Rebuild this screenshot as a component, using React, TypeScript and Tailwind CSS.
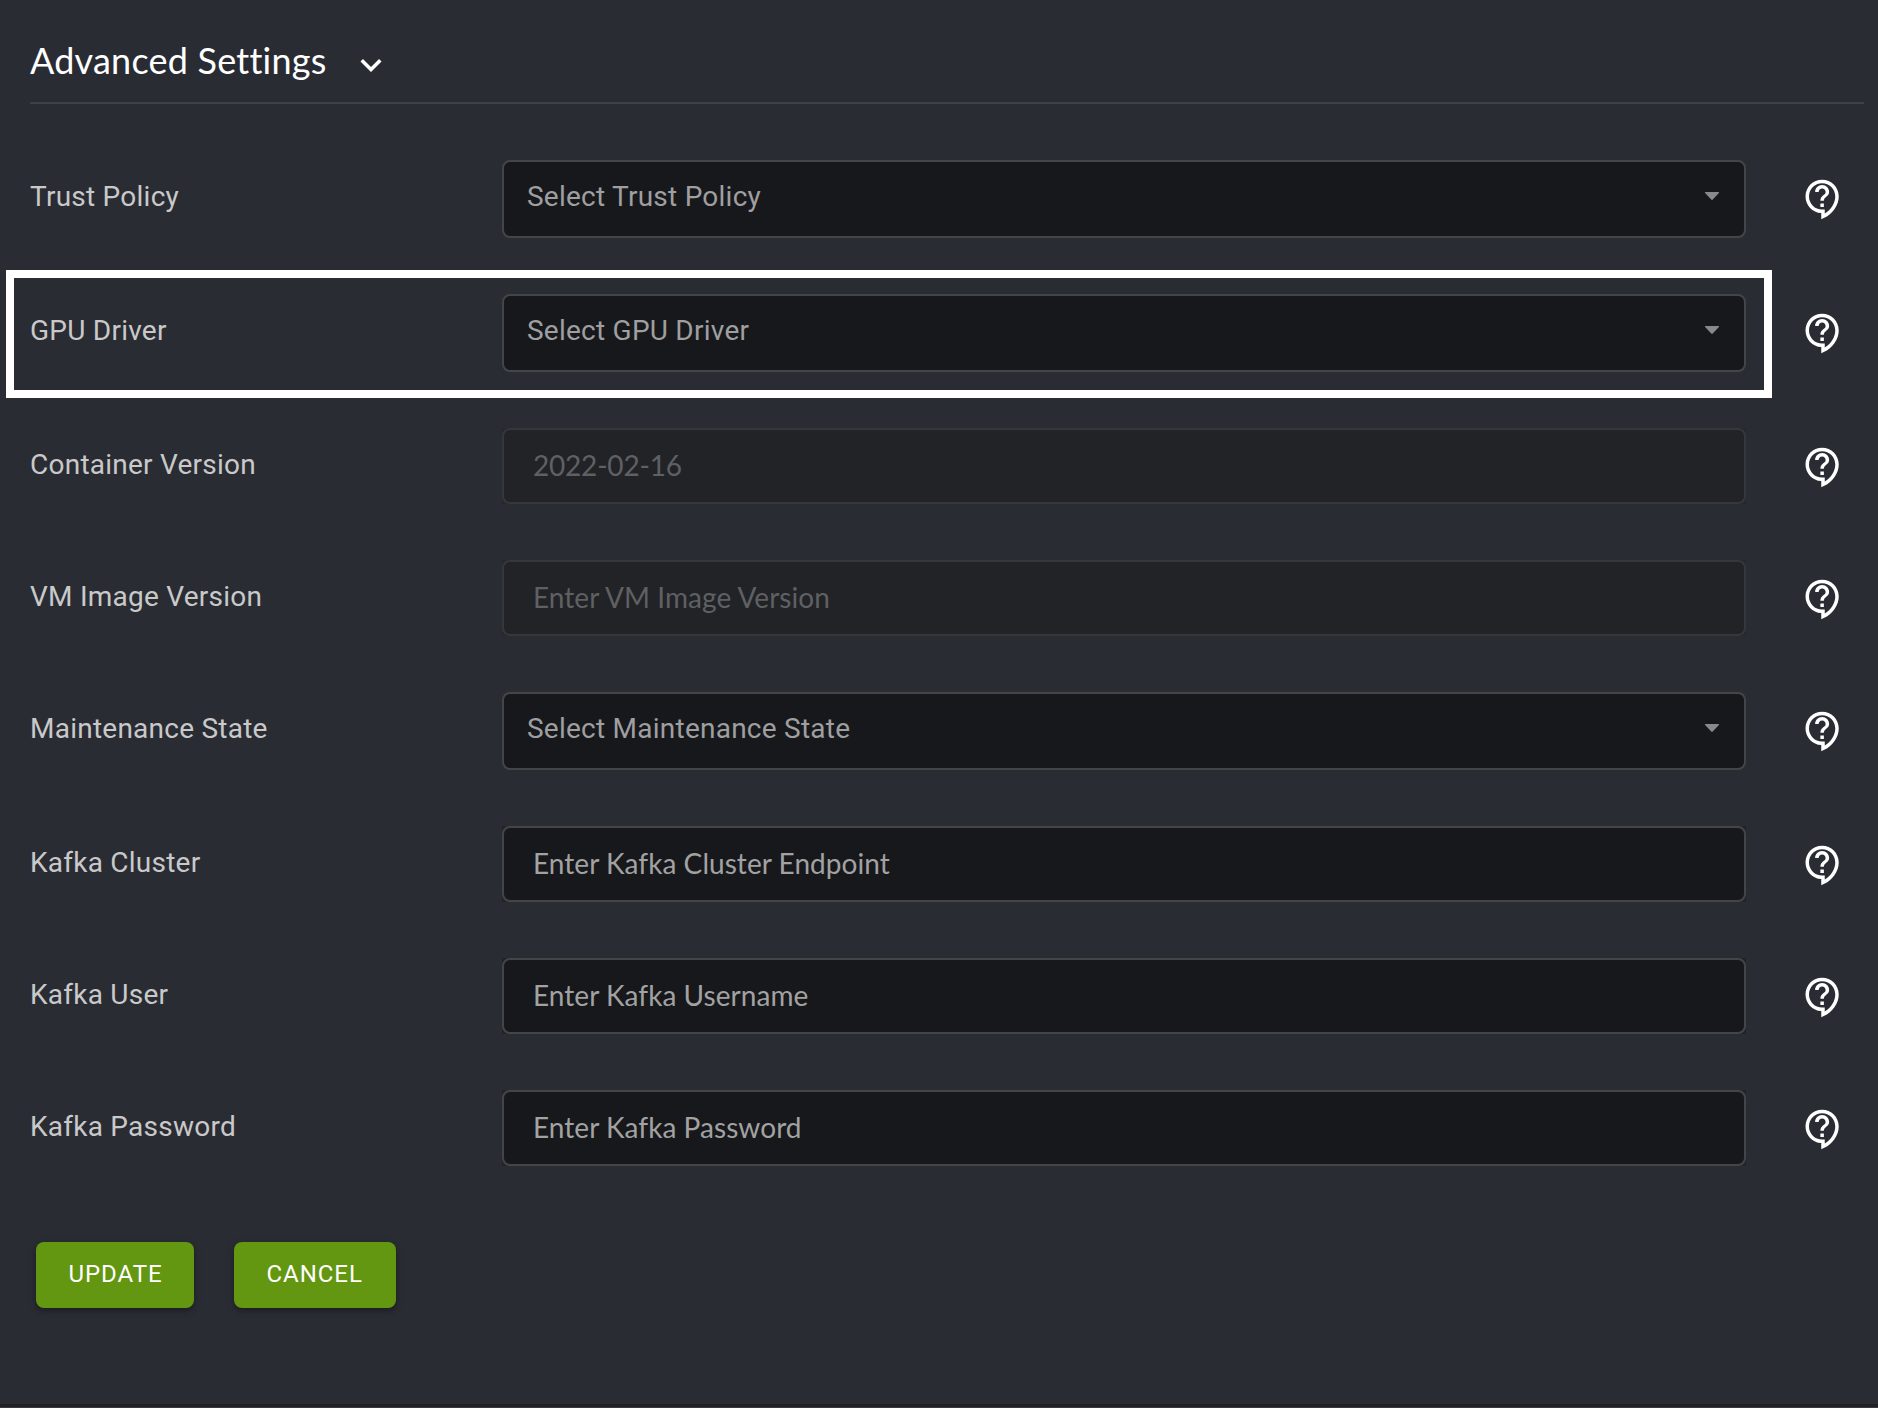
import { MdExpandMore, MdOutlineContactSupport } from "react-icons/md";

type Kind = "select" | "input" | "disabled";

interface Field {
  label: string;
  text: string;
  kind: Kind;
  highlighted?: boolean;
}

const fields: Field[] = [
  { label: "Trust Policy", text: "Select Trust Policy", kind: "select" },
  { label: "GPU Driver", text: "Select GPU Driver", kind: "select", highlighted: true },
  { label: "Container Version", text: "2022-02-16", kind: "disabled" },
  { label: "VM Image Version", text: "Enter VM Image Version", kind: "disabled" },
  { label: "Maintenance State", text: "Select Maintenance State", kind: "select" },
  { label: "Kafka Cluster", text: "Enter Kafka Cluster Endpoint", kind: "input" },
  { label: "Kafka User", text: "Enter Kafka Username", kind: "input" },
  { label: "Kafka Password", text: "Enter Kafka Password", kind: "input" },
];

function SelectBox({ text }: { text: string }) {
  return (
    <div className="flex h-[78px] w-[1244px] items-start justify-between rounded-lg border-2 border-[#444547] bg-[#17181c] pt-[18px] pr-[24.5px] pl-[23px]">
      <span className="text-[28px] leading-[33px] tracking-[0.24px] text-[#9f9fa0]">{text}</span>
      <svg className="mt-3 h-2 w-4 fill-[#88898b]" viewBox="0 0 16 8" aria-hidden="true">
        <path d="M1.6 0h12.8c.7 0 .9.7.5 1.1L8.5 7.7c-.3.3-.7.3-1 0L1.1 1.1C.7.7.9 0 1.6 0z" />
      </svg>
    </div>
  );
}

function InputBox({ text, disabled }: { text: string; disabled: boolean }) {
  const wrapper = disabled ? "bg-[#26282d]" : "bg-[#222429]";
  const box = disabled
    ? "border-[#35373a] bg-[#222327] text-[#5f6063]"
    : "border-[#444547] bg-[#17181b] text-[#a2a2a2]";
  const tracking = /^\d/.test(text) ? "tracking-[-0.2px]" : "tracking-[0.05px]";
  return (
    <div className={`h-[76px] w-[1244px] ${wrapper}`}>
      <div className={`h-full rounded-lg border-2 pt-[18px] pl-[29px] font-['Lato',sans-serif] text-[28px] leading-[34px] ${box} ${tracking}`}>
        {text}
      </div>
    </div>
  );
}

function FieldRow({ field }: { field: Field }) {
  return (
    <div className="relative flex items-start">
      {field.highlighted && (
        <div className="pointer-events-none absolute -top-6 -left-6 h-32 w-[1766px] border-8 border-white" />
      )}
      <label className="w-[472px] pt-5 text-[28px] leading-[33px] tracking-[0.24px] text-[#c9c9c9]">{field.label}</label>
      {field.kind === "select" ? (
        <SelectBox text={field.text} />
      ) : (
        <InputBox text={field.text} disabled={field.kind === "disabled"} />
      )}
      <MdOutlineContactSupport className="mt-[18px] ml-14 size-[42px] text-white" />
    </div>
  );
}

function ActionButton({ label, width }: { label: string; width: string }) {
  return (
    <button
      className={`h-[66px] rounded-lg bg-[#639611] pt-[18px] pb-5 pl-[32.5px] text-left text-[24px] leading-7 tracking-[0.95px] text-white shadow-[0_3px_4px_rgba(0,0,0,0.22),0_2px_8px_rgba(0,0,0,0.14)] ${width}`}
    >
      {label}
    </button>
  );
}

export default function App() {
  return (
    <div className="flex h-[1408px] w-[1878px] flex-col overflow-hidden bg-[#2a2c34] font-['Roboto',sans-serif]">
      <main className="flex-1 pl-[30px]">
        <header className="flex h-[104px] w-[1834px] items-start border-b-2 border-[#3e4148]">
          <h2 className="mt-[38px] w-80 font-['Lato',sans-serif] text-[36px] leading-[44px] tracking-[0.22px] text-white">
            Advanced Settings
          </h2>
          <MdExpandMore className="mt-11 size-[42px] text-white" />
        </header>
        <div className="mt-14 flex flex-col gap-14">
          {fields.map((f) => (
            <FieldRow key={f.label} field={f} />
          ))}
        </div>
        <div className="mt-[76px] flex gap-10 pl-1.5">
          <ActionButton label="UPDATE" width="w-[158px]" />
          <ActionButton label="CANCEL" width="w-[162px]" />
        </div>
      </main>
      <div className="h-1 border-b border-[#3c393e] bg-[#202125]" />
    </div>
  );
}
